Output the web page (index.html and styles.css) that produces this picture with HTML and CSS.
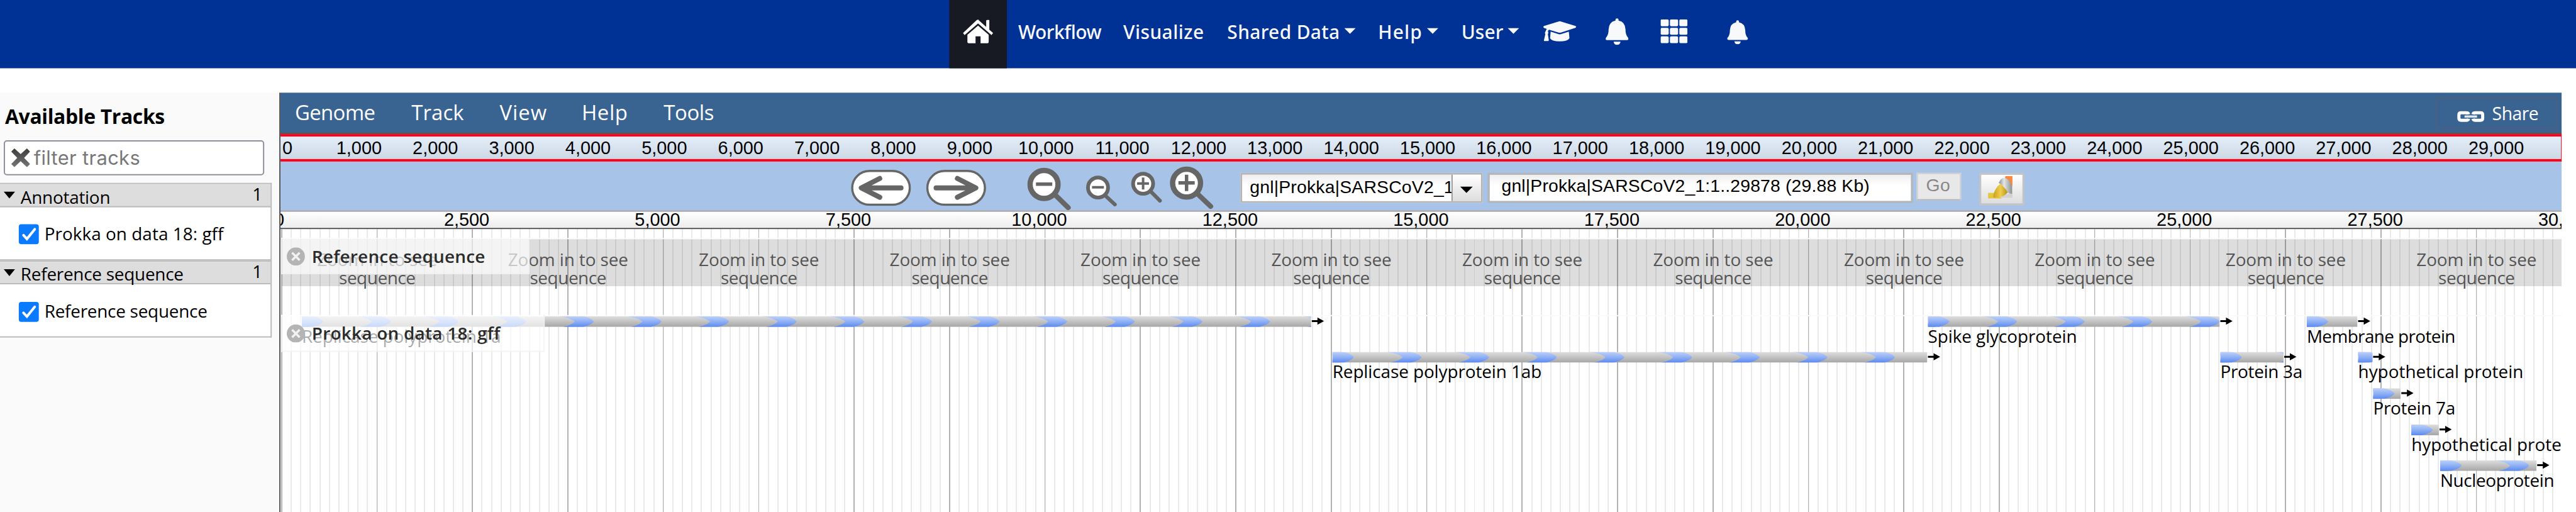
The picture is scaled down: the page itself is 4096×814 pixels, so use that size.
FILE: index.html
```html
<!DOCTYPE html>
<html lang="en">
<head>
<meta charset="utf-8">
<title>Genome browser</title>
<link rel="stylesheet" href="styles.css">
</head>
<body>
<div class="page">
  <header class="masthead">
    <a class="home"><svg width="50" height="40" viewBox="0 0 50 40"><path d="M25 1.500 L38 13 V3.500 Q38 2 39.500 2 H43 V17.500 L49 22.800 L46.500 26 L25 7.500 L3.500 26 L1 22.800 L22.500 2.500 Q25 .5 27.500 2.500Z"/><path d="M25 11 L42 25.500 V37 Q42 39 40 39 H29 V28 H21 V39 H10 Q8 39 8 37 V25.500Z"/></svg></a>
    <span class="nav n1" data-w="133">Workflow</span>
    <span class="nav n2" data-w="129">Visualize</span>
    <span class="nav n3" data-w="180">Shared Data</span><i class="caret"></i>
    <span class="nav n4" data-w="71">Help</span><i class="caret"></i>
    <span class="nav n5" data-w="67">User</span><i class="caret"></i>
    <svg class="i-cap" width="54" height="34" viewBox="0 0 54 34"><path d="M25 1.300 Q27 .6 29 1.300 L52 8.500 Q54.500 10 52 11.500 L29 19 Q27 19.700 25 19 L10 14.500 Q8.500 15.500 8 17 Q9.500 19 8 21.500 L9.500 31 Q9.500 32.500 8.500 32.500 H2.500 Q1.500 32.500 1.700 31.500 L4 21.500 Q2.500 19 4.500 17 Q5 14.500 6.500 13.200 L2 11.700 Q-.5 10 2 8.500Z"/><path d="M12.500 17.500 L25 21.400 Q27 22 29 21.400 L41.500 17.500 L42.500 28 Q40 33 27 33 Q14 33 11.500 28Z"/></svg>
    <svg class="i-bell" width="37" height="43" viewBox="0 0 37 43"><path d="M16 4 V3 Q16 .5 18.500 .5 Q21 .5 21 3 V4 Q31.500 6 32 18 Q32 27 36 31 Q38 34.500 34.500 35 H2.500 Q-1 34.500 1 31 Q5 27 5 18 Q5.500 6 16 4Z"/><path d="M13 37.500 H24 Q23.500 42.500 18.500 42.500 Q13.500 42.500 13 37.500Z"/></svg>
    <svg class="i-grid" width="43" height="38" viewBox="0 0 43 38"><g id="cells"><rect x="0" y="0" width="13" height="11" rx="2"/><rect x="15" y="0" width="13" height="11" rx="2"/><rect x="30" y="0" width="13" height="11" rx="2"/><rect x="0" y="13.500" width="13" height="11" rx="2"/><rect x="15" y="13.500" width="13" height="11" rx="2"/><rect x="30" y="13.500" width="13" height="11" rx="2"/><rect x="0" y="27" width="13" height="11" rx="2"/><rect x="15" y="27" width="13" height="11" rx="2"/><rect x="30" y="27" width="13" height="11" rx="2"/></g></svg>
    <svg class="i-bell2" width="34" height="39" viewBox="0 0 37 43"><path d="M16 4 V3 Q16 .5 18.500 .5 Q21 .5 21 3 V4 Q31.500 6 32 18 Q32 27 36 31 Q38 34.500 34.500 35 H2.500 Q-1 34.500 1 31 Q5 27 5 18 Q5.500 6 16 4Z"/><path d="M13 37.500 H24 Q23.500 42.500 18.500 42.500 Q13.500 42.500 13 37.500Z"/></svg>
  </header>

  <div class="body">
    <aside class="sidebar">
      <h1><span data-w="255">Available Tracks</span></h1>
      <div class="filter">
        <svg width="30" height="30" viewBox="0 0 30 30"><defs><linearGradient id="gx" x2="0" y2="1"><stop offset="0" stop-color="#3c3c3c"/><stop offset="1" stop-color="#777"/></linearGradient></defs><path fill="url(#gx)" d="M0 5 L5 0 L15 9 L25 0 L30 5 L20.500 15 L30 25 L25 30 L15 20.500 L5 30 L0 25 L9.500 15Z"/></svg>
        <span data-w="170">filter tracks</span>
      </div>
      <section class="group">
        <div class="group-head"><i class="tri"></i><b data-w="143">Annotation</b><em>1</em></div>
        <div class="group-body"><span class="check"><svg width="32" height="32" viewBox="0 0 32 32"><path d="M7.500 17.500 L13 23.500 L25.500 8" fill="none" stroke="#fff" stroke-width="4" stroke-linecap="round"/></svg></span><span data-w="286">Prokka on data 18: gff</span></div>
      </section>
      <section class="group second">
        <div class="group-head"><i class="tri"></i><b data-w="260">Reference sequence</b><em>1</em></div>
        <div class="group-body"><span class="check"><svg width="32" height="32" viewBox="0 0 32 32"><path d="M7.500 17.500 L13 23.500 L25.500 8" fill="none" stroke="#fff" stroke-width="4" stroke-linecap="round"/></svg></span><span data-w="260">Reference sequence</span></div>
      </section>
    </aside>

    <main class="browser">
      <div class="menubar">
        <span class="m1" data-w="128">Genome</span><span class="m2" data-w="84">Track</span><span class="m3" data-w="76">View</span><span class="m4" data-w="74">Help</span><span class="m5" data-w="80">Tools</span>
        <div class="share">
          <svg width="44" height="18" viewBox="0 0 44 18" fill="none" stroke="#fff"><path stroke-width="5" stroke-linejoin="round" d="M18.500 5.500 Q18 3 14.500 3 H6.500 Q3 3 3 6.500 V11.500 Q3 15 6.500 15 H14.500 Q18 15 18.500 12.500 M25.500 5.500 Q26 3 29.500 3 H37.500 Q41 3 41 6.500 V11.500 Q41 15 37.500 15 H29.500 Q26 15 25.500 12.500"/><path stroke-width="3.500" stroke="#dfe6ee" d="M12 9 H32"/></svg>
          <span data-w="74">Share</span>
        </div>
      </div>
      <div class="overview" id="overview"></div>
      <div class="toolbar">
        <svg class="t1" width="96" height="58" viewBox="0 0 96 58"><rect x="2" y="2" width="92" height="54" rx="28" ry="27" fill="#fff" stroke="#666" stroke-width="3.500"/><path d="M80 29 H18 M46 14 L16.500 29 L46 44" fill="none" stroke="#666" stroke-width="8" stroke-linecap="round" stroke-linejoin="round"/></svg>
        <svg class="t2" width="96" height="58" viewBox="0 0 96 58"><rect x="2" y="2" width="92" height="54" rx="28" ry="27" fill="#fff" stroke="#666" stroke-width="3.500"/><path d="M16 29 H78 M50 14 L79.500 29 L50 44" fill="none" stroke="#666" stroke-width="8" stroke-linecap="round" stroke-linejoin="round"/></svg>
        <svg class="zooms" width="300" height="76" viewBox="1640 260 300 76" fill="none" stroke="#666">
          <g stroke-linecap="round"><path stroke-width="8" d="M1687 313 L1706 331.500"/><path stroke-width="6" d="M1767 314 L1780.500 326.500"/><path stroke-width="6" d="M1839 307 L1852.500 320.500"/><path stroke-width="8" d="M1914 311 L1933.500 329.500"/></g>
          <circle cx="1667.400" cy="294.500" r="22.300" stroke-width="8.500" fill="#fff"/><circle cx="1753.600" cy="299.500" r="16" stroke-width="6" fill="#fff"/><circle cx="1825.600" cy="293.400" r="16" stroke-width="6" fill="#fff"/><circle cx="1895" cy="292.400" r="22.300" stroke-width="8.500" fill="#fff"/>
          <path stroke-width="5.500" d="M1654.500 294 H1680.500 M1882 292 H1908 M1895 279 V305"/><path stroke-width="4" d="M1744 299 H1763 M1816 293 H1835 M1825.600 283.500 V302.500"/>
        </svg>
        <div class="select"><div class="value"><span data-w="326">gnl|Prokka|SARSCoV2_1</span></div><div class="drop"><i class="tri"></i></div></div>
        <div class="location"><span data-w="588">gnl|Prokka|SARSCoV2_1:1..29878 (29.88 Kb)</span></div>
        <div class="go"><span data-w="39">Go</span></div>
        <div class="mark"><svg width="40" height="38" viewBox="0 0 40 38"><defs><linearGradient id="gs"><stop offset="0" stop-color="#8b8f8f"/><stop offset=".4" stop-color="#e4e6e6"/><stop offset="1" stop-color="#8b8f8f"/></linearGradient><linearGradient id="gy"><stop offset="0" stop-color="#c99f1c"/><stop offset=".5" stop-color="#f0cf4c"/><stop offset="1" stop-color="#b58a17"/></linearGradient></defs><path fill="#d2d2d2" d="M20 32 L39 27 V35 H20Z"/><path fill="#e6c63c" d="M0 27 H12 L22 36 H0Z"/><path fill="#f58a45" d="M28 0 H39 V16 L27 3Z"/><path fill="url(#gy)" d="M20 12 L32 25 Q27 34 10 35 L8 33 Q10 20 20 12Z"/><path fill="url(#gs)" d="M17 11 Q21 2 27 3 Q35 6 38.500 16 V28 Q35 29 31 26 Q27 16 17 11Z"/></svg></div>
      </div>
      <div class="ruler" id="ruler"></div>
      <div class="canvas">
        <div class="sep s1"></div>
        <div class="sequence" id="sequence"></div>
        <div class="sep s2"></div>
        <div id="features"></div>
        <div class="label l1"><svg width="29" height="29" viewBox="0 0 29 29"><circle cx="14.500" cy="14.500" r="14.500" fill="#b4b4b4"/><path d="M8.500 8.500 L20.500 20.500 M20.500 8.500 L8.500 20.500" stroke="#f2f2f2" stroke-width="3.500"/></svg><span data-w="277">Reference sequence</span></div>
        <div class="label l2"><svg width="29" height="29" viewBox="0 0 29 29"><circle cx="14.500" cy="14.500" r="14.500" fill="#b4b4b4"/><path d="M8.500 8.500 L20.500 20.500 M20.500 8.500 L8.500 20.500" stroke="#f2f2f2" stroke-width="3.500"/></svg><span data-w="301">Prokka on data 18: gff</span></div>
      </div>
    </main>
  </div>
</div>
<svg class="defs" width="0" height="0">
  <defs>
    <linearGradient id="grey" x2="0" y2="1"><stop offset="0" stop-color="#dedede"/><stop offset="1" stop-color="#a6a6a6"/></linearGradient>
    <linearGradient id="blue" x2="0" y2="1"><stop offset="0" stop-color="#bdd0f9"/><stop offset=".5" stop-color="#8fb0f5"/><stop offset="1" stop-color="#5c8af0"/></linearGradient>
    <symbol id="chev" viewBox="0 0 60 17" overflow="visible"><path fill="url(#blue)" d="M3 0 H42 Q55 3 59 8.500 Q55 14 42 17 H10 Q24 14 28.500 8.500 Q22 2.500 3 0Z"/></symbol>
  </defs>
</svg>
<script src="app.js"></script>
</body>
</html>
```
FILE: styles.css
```css
* { box-sizing: border-box; }
html, body { margin: 0; overflow: hidden; background: #fff; }
.page { width: 4114px; height: 818px; overflow: hidden; transform: scale(.995625); transform-origin: 0 0; font-family: "Open Sans", "Noto Sans", sans-serif; font-size: 28px; font-weight: 500; color: #000; background: #fff; }
.defs { position: absolute; }
svg { display: block; flex: none; }
[data-w] { display: inline-block; white-space: pre; flex: none; }

.masthead { height: 109px; padding-left: 1516px; background: #003296; display: flex; align-items: flex-start; color: #f8f9fb; fill: #f8f9fb; font: 500 30px/40px "Noto Sans", sans-serif; }
.home { width: 92px; height: 109px; padding: 30px 0 0 21px; background: #171a22; fill: #fff; }
.nav { margin-top: 31px; }
.n1 { margin-left: 18px; }
.n2 { margin-left: 35px; }
.n3 { margin-left: 37px; }
.n4 { margin-left: 36px; }
.n5 { margin-left: 37px; }
.caret { margin: 45px 0 0 7px; border: solid transparent; border-width: 9px 9px 0; border-top-color: #f8f9fb; }
.i-cap { margin: 33px 0 0 38px; }
.i-bell { margin: 29px 0 0 46px; }
.i-grid { margin: 31px 0 0 51px; }
.i-bell2 { margin: 32px 0 0 63px; }

.body { display: flex; margin-top: 39px; height: 670px; }
.sidebar { width: 448px; border-right: 2px solid #555; background: #fafafa; }
.sidebar h1 { margin: 0; padding: 18px 0 0 8px; height: 76px; font: bold 32px/40px "Open Sans", "Noto Sans", sans-serif; }
.filter { display: flex; align-items: center; width: 416px; height: 56px; margin-left: 6px; padding-left: 10px; border: 2px solid #8f8f9d; border-radius: 5px; background: #fff; font: 31px/52px Inter, sans-serif; color: #777; }
.filter span { margin-left: 6px; }
.group { width: 434px; margin-top: 12px; border: solid #bbb; border-width: 2px 2px 2px 0; background: #fff; height: 124px; }
.group.second { margin-top: 0; height: 123px; }
.group-head { display: flex; height: 37px; background: #ddd; border-bottom: 2px solid #bbb; line-height: 38px; }
.second .group-head { height: 36px; }
.group-head b { font-weight: 500; margin: 1px 0 0 9px; }
.second .group-head b { margin-top: 0; }
.group-head em { font-style: normal; margin: -4px 13px 0 auto; }
.tri { display: block; flex: none; width: 0; height: 0; border: solid transparent; border-width: 11px 9px 0; border-top-color: #000; }
.group-head .tri { margin: 12px 0 0 6px; }
.group-body { display: flex; line-height: 40px; padding: 22px 0 0 30px; }
.group-body > span + span { margin-left: 9px; margin-top: 0; }
.check { width: 32px; height: 32px; margin-top: 5px; border-radius: 4px; background: #0a7bff; }
.second .check { margin-top: 6px; }
.second .group-body > span + span { margin-top: 0; }

.browser { width: 3643px; }
.menubar { display: flex; height: 66px; background: #396492; border-bottom: 2px solid #555; color: #fff; font-size: 33px; line-height: 40px; padding-top: 12px; }
.m1 { margin-left: 23px; }
.m2 { margin-left: 58px; }
.m3 { margin-left: 57px; }
.m4 { margin-left: 55px; }
.m5 { margin-left: 57px; }
.share { display: flex; width: 196px; height: 52px; margin: -5px 6px 0 auto; padding-left: 31px; border: 4px solid #446288; font-size: 28.500px; }
.share svg { margin-top: 18px; }
.share span { margin: 2px 0 0 12px; }
.overview { position: relative; overflow: hidden; height: 44px; border: solid #ff0018; border-width: 4px 1px 4px 0; background: linear-gradient(#e3eef9, #cdd8e5); font: 29px/36px "Liberation Sans", sans-serif; }
.tick { position: absolute; width: 120px; text-align: center; white-space: nowrap; }
.toolbar { display: flex; height: 78px; background: #a7c3e8; font: 28.500px/40px "Liberation Sans", sans-serif; }
.t1 { margin: 13px 0 0 911px; }
.t2 { margin: 13px 0 0 24px; }
.zooms { margin: 2px 0 0 65px; }
.select { display: flex; width: 387px; height: 48px; margin: 18px 0 0 41px; border: 3px solid #b5b5b5; background: #fff; }
.value { width: 334px; overflow: hidden; padding: 0 0 0 12px; background: linear-gradient(#eee, #fff 40%); line-height: 38px; }
.drop { width: 47px; border-left: 2px solid #999; background: linear-gradient(#fff, #ddd); padding: 19px 0 0 12px; }
.drop .tri { border-width: 10px 10px 0; }
.location { width: 679px; height: 48px; margin: 18px 0 0 8px; padding-left: 19px; border: 3px solid #b5b5b5; background: linear-gradient(#eee, #fff 40%); line-height: 34px; }
.go { width: 71px; height: 44px; margin: 18px 0 0 6px; padding-left: 13px; border: 2px solid #d0d0d0; border-bottom-color: #b5b5b5; background: #e8e8e8; color: #888; line-height: 34px; }
.mark { width: 72px; height: 52px; margin: 18px 0 0 29px; padding: 2px 0 0 11px; border: 3px solid #c4c4c4; background: linear-gradient(#fff, #ddd); }
.ruler { position: relative; overflow: hidden; height: 30px; border-top: 2px solid #999; border-bottom: 2px solid #444; background: linear-gradient(#fff, #ececec); font: 29px/27px "Liberation Sans", sans-serif; }

.canvas { position: relative; height: 452px; overflow: hidden; background: repeating-linear-gradient(90deg, transparent 0 .8px, #b2b2b2 .8px 2.500px, transparent 2.500px 152.400px), repeating-linear-gradient(90deg, #fff 0 .8px, #eaeaea .8px 2.800px, #fff 2.800px 15.240px); }
.sep { position: absolute; left: 0; right: 0; height: 2px; background: #fbfbfb; }
.s1 { top: 14px; }
.s2 { top: 137px; }
.sequence { position: absolute; left: 2px; right: 0; top: 16px; height: 75px; background: rgba(0,0,0,.133); display: flex; color: #555; line-height: 29px; }
.sequence div { flex: none; width: 304.800px; padding-top: 18px; display: flex; flex-direction: column; align-items: center; }
.feature { position: absolute; display: flex; flex-direction: column; align-items: flex-start; }
.feature span { line-height: 30px; margin-top: -1px; }
.label { position: absolute; left: 1px; display: flex; border: solid rgba(238,238,238,.6); border-width: 0 2px 2px 0; background: rgba(255,255,255,.67); color: #2b2b2b; font-weight: 600; line-height: 30px; }
.label svg { margin: 13px 0 0 9px; }
.label span { margin: 12px 0 0 11px; }
.l1 { top: 16px; width: 397px; height: 56px; }
.l2 { top: 137px; width: 421px; height: 59px; }
.l2 span { margin-top: 13px; }
.l2 svg { margin-top: 15px; }
```
FILE: app.js
```js
const html = [];
const fmt = n => n.toLocaleString('en-US');

// Overview scale: one label per kilobase.
for (let n = 0; n < 30; n++) {
  const x = n ? 3.5 + n * 121.9 - 60 : -49;
  html.push(`<span class="tick" style="left:${x}px">${fmt(n * 1000)}</span>`);
}
document.getElementById('overview').innerHTML = html.join('');

// Track scale: one label per 2.5 kb.
document.getElementById('ruler').innerHTML = Array.from({ length: 13 }, (_, n) =>
  `<span class="tick" style="left:${(n ? -7.5 : -2) + n * 304.8 - 60}px">${fmt(n * 2500)}</span>`).join('');

document.getElementById('sequence').innerHTML =
  '<div><span data-w="192">Zoom in to see</span><span data-w="122">sequence</span></div>'.repeat(12);

// [start, end, row, name, label width]
const features = [
  [482, 2094, 0, 'Replicase polyprotein 1a', 318],
  [2128, 3078, 1, 'Replicase polyprotein 1ab', 334],
  [3079, 3545, 0, 'Spike glycoprotein', 238],
  [3546, 3647, 1, 'Protein 3a', 131],
  [3684, 3765, 0, 'Membrane protein', 237],
  [3766, 3789, 1, 'hypothetical protein', 264],
  [3790, 3834, 2, 'Protein 7a', 131],
  [3851, 3895, 3, 'hypothetical protein', 264],
  [3897, 4051, 4, 'Nucleoprotein', 182]
];
const rows = [139, 196, 254, 312, 369];
document.getElementById('features').innerHTML = features.map(([a, b, row, name, w]) => {
  const len = b - a;
  let chev = '';
  for (let x = -24.5; x < len; x += 108) chev += `<use href="#chev" x="${x}" y="0" width="60" height="17"/>`;
  return `<div class="feature" style="left:${a - 448}px;top:${rows[row]}px">
    <svg width="${len + 22}" height="17"><svg width="${len}" height="17"><rect width="${len}" height="17" fill="url(#grey)"/><rect width="12" height="17" fill="url(#blue)"/>${chev}</svg>
    <path d="M${len + 1} 6.200 H${len + 10} V2 L${len + 20.5} 7.700 L${len + 10} 13.500 V9.200 H${len + 1}Z"/></svg>
    <span data-w="${w}">${name}</span></div>`;
}).join('');

const scale = document.querySelector('.page').getBoundingClientRect().width / 4114;
document.querySelectorAll('[data-w]').forEach(el => {
  const want = +el.dataset.w;
  const own = el.getBoundingClientRect().width / scale;
  el.style.letterSpacing = (want - own) / el.textContent.length + 'px';
});
```
